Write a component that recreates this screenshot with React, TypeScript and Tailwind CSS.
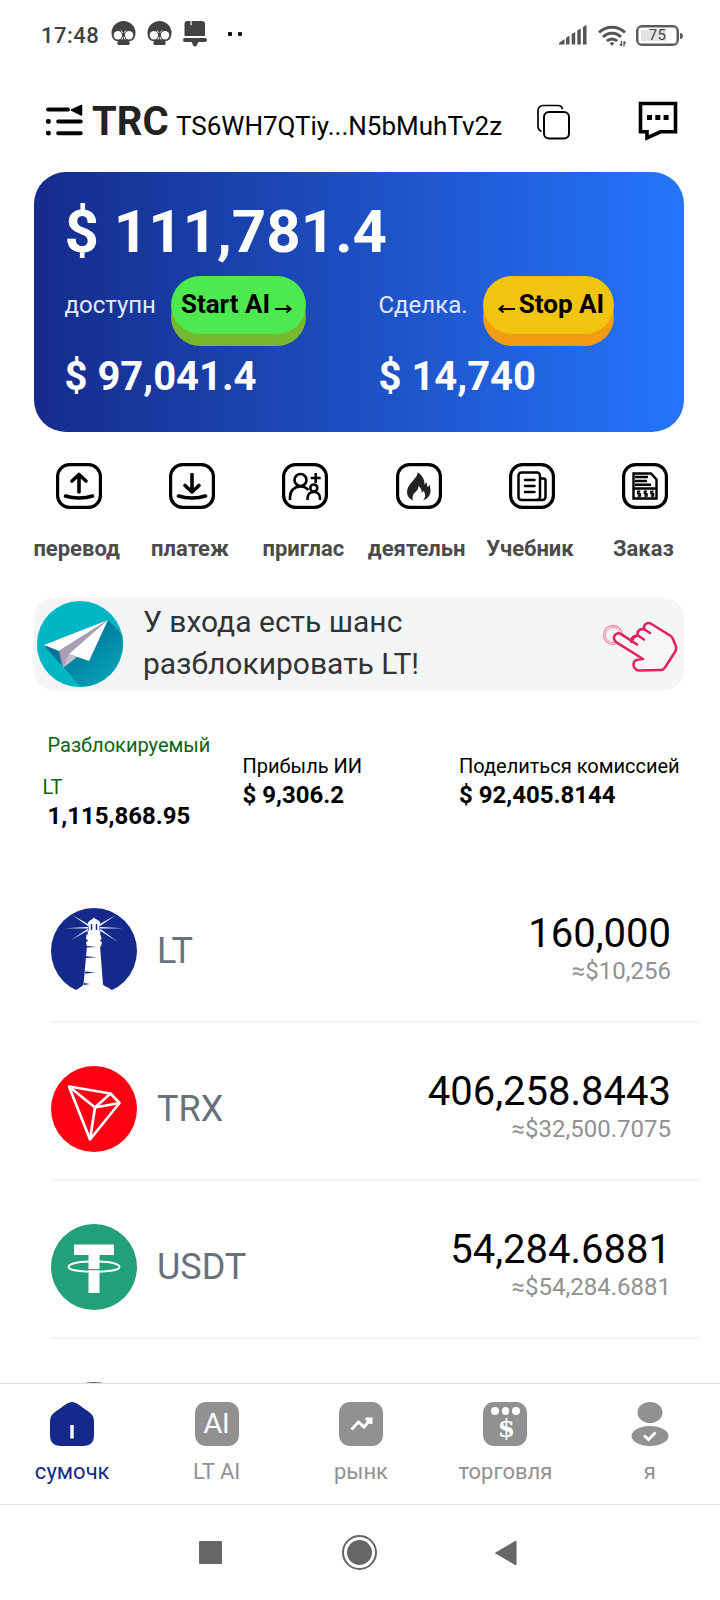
import type { ReactNode } from "react";

type Asset = {
  symbol: string;
  amount: string;
  usd: string;
  logo: ReactNode;
};

const SkullIcon = () => (
  <svg width="25" height="25" viewBox="0 0 25 25">
    <path d="M12.500 0a12 12 0 0 0-12 12c0 4 1.500 6.600 4 7.800l2.500.4-.8 1.800.8 2h11l.8-2-.8-1.800 2.500-.4c2.500-1.200 4-3.800 4-7.800a12 12 0 0 0-12-12z" fill="#424242" />
    <circle cx="6.900" cy="14.200" r="4.200" fill="#fff" />
    <circle cx="18.100" cy="14.200" r="4.200" fill="#fff" />
    <path d="M9.800 9.500l2.200 2.200M15.200 9.500L13 11.700M10.800 18.700l1.200-2.700M14.200 18.700L13 16" stroke="#fff" strokeWidth="1" />
  </svg>
);

const BellIcon = () => (
  <svg width="24" height="26" viewBox="0 0 24 26" fill="#424242">
    <path d="M4.500 0H19a3 3 0 0 1 3 3v12H1.500V3a3 3 0 0 1 3-3z" />
    <path d="M8 0v4.300" stroke="#fff" strokeWidth="1.200" />
    <rect x="0" y="17" width="24" height="4" rx="2" />
    <path d="M8.500 21h7l-1.800 3.500a2 2 0 0 1-3.400 0z" />
  </svg>
);

const StatusBar = () => (
  <div className="flex h-[71px] items-center pl-[41px] pr-[37px]">
    <span className="w-[70px] text-[22px] leading-none font-medium tracking-[0.5px] text-[#424242]">17:48</span>
    <div className="-mt-1 flex items-center gap-[11px]">
      <SkullIcon />
      <SkullIcon />
      <BellIcon />
    </div>
    <div className="ml-[21px] -mt-1 flex gap-1.5">
      <span className="size-1 rounded-[1px] bg-[#111]" />
      <span className="size-1 rounded-[1px] bg-[#111]" />
    </div>
    <div className="ml-auto flex items-center">
      <svg className="-mt-px" width="28" height="20" viewBox="0 0 28 20" fill="#555">
        <path d="M0 19.500v-1.500l5.500-4v5.500z" />
        <path d="M7 12.800l3.500-2v8.700H7z" />
        <path d="M12.700 9l3.500-2v12.500h-3.500z" />
        <path d="M18.300 5.500l3.500-2v16h-3.500z" />
        <path d="M24 2l3.500-2v19.500H24z" />
      </svg>
      <svg className="ml-[11px]" width="28" height="22" viewBox="0 0 28 22" fill="none" stroke="#555" strokeWidth="3">
        <path d="M1 7.500a18.500 18.500 0 0 1 26 0" />
        <path d="M5 12a12.500 12.500 0 0 1 18 0" />
        <path d="M8.800 16a7.500 7.500 0 0 1 10.400 0" />
        <path d="M11.500 18.300a3.800 3.800 0 0 1 5 0L14 20.800z" fill="#555" stroke="none" />
        <path d="M23.500 16v5M22 19l1.500 2M26 16.500v5M26 16.500l1.500 2" strokeWidth="1.300" />
      </svg>
      <div className="ml-2.5 flex h-[21px] w-[43px] items-center justify-center rounded-[6px] border-[2.5px] border-[#5c5c5c] p-[3px] shadow-[inset_0_0_0_0.5px_#5c5c5c]">
        <span className="h-full w-full bg-linear-to-r from-[#e3e3e3] from-75% to-white to-75% text-center text-[15px] leading-[11px] tracking-wide text-[#444]">75</span>
      </div>
      <span className="ml-px h-1.5 w-[3px] rounded-r bg-[#5c5c5c]" />
    </div>
  </div>
);

const Header = () => (
  <header className="flex h-[101px] items-center pl-[45px]">
    <svg className="-mt-1" width="38" height="32" viewBox="0 0 38 32" stroke="#000" strokeWidth="4" strokeLinecap="round">
      <path d="M3 5.500h20M13.200 17.500h22.500M13.200 29.200h22.500" />
      <path d="M3.200 17.500h.3M3.200 29.200h.3" strokeWidth="4.800" />
      <path d="M26.500 6L36.500 1.500v9.500z" strokeWidth="1.500" strokeLinejoin="round" />
    </svg>
    <div className="ml-[9px] flex w-[445px] items-baseline text-black">
      <span className="w-[84px] text-[40px] leading-none font-bold text-[#222]">TRC</span>
      <span className="text-[26px] leading-none">TS6WH7QTiy...N5bMuhTv2z</span>
    </div>
    <svg className="mt-px -ml-px" width="34" height="36" viewBox="0 0 34 36" fill="none" stroke="#000" strokeWidth="1.700">
      <path d="M5.500 27.500C3 26.500 2 25 2 22V6.500a5 5 0 0 1 5-5h15c2.500 0 4 1 4.600 3.700" />
      <rect x="8" y="8" width="25" height="26.500" rx="5" strokeWidth="2" />
    </svg>
    <svg className="-mt-px ml-[68px]" width="40" height="42" viewBox="0 0 40 42" fill="none" stroke="#000" strokeWidth="3.600">
      <path d="M2.500 3.500h35v28.300H22.500L9 38v-6.200H2.500z" />
      <path d="M9 17.500h5M17.300 17.500h5M25.600 17.500h5" strokeWidth="5" />
    </svg>
  </header>
);

const Arrow = ({ left }: { left?: boolean }) => (
  <svg className={left ? "mt-2 mr-1 ml-[5px] rotate-180" : "mt-2 mr-1 ml-[5px]"} width="17" height="10" viewBox="0 0 17 10" fill="none" stroke="#000" strokeWidth="2">
    <path d="M0 5h14M11.500 1.500L15.500 5l-4 3.500" />
  </svg>
);

const BalanceCard = () => (
  <section className="mx-[34px] h-[260px] w-[650px] rounded-[32px] bg-linear-to-r from-[#152b8b] to-[#2575fc] pt-[30px] pl-[30.5px] text-white">
    <h1 className="text-[60px] leading-[60px] font-bold">$ 111,781.4</h1>
    <div className="mt-3.5 flex">
      <div className="w-[314px]">
        <div className="flex h-[58px] items-center">
          <span className="w-[106.5px] text-2xl text-[#e4e9f8]">доступн</span>
          <button className="flex h-[58px] w-[135px] items-center justify-center rounded-[29px] bg-[#4ee84f] pb-px text-[26px] font-bold text-black shadow-[0_12px_0_#78b72f]">
            Start AI<Arrow />
          </button>
        </div>
        <p className="mt-[23px] text-[40px] leading-10 font-bold">$ 97,041.4</p>
      </div>
      <div>
        <div className="flex h-[58px] items-center">
          <span className="w-[104.5px] text-2xl text-[#e4e9f8]">Сделка.</span>
          <button className="flex h-[58px] w-[131px] items-center justify-center rounded-[29px] bg-[#f1c40f] pb-px text-[26px] font-bold text-black shadow-[0_12px_0_#f39c12]">
            <Arrow left />Stop AI
          </button>
        </div>
        <p className="mt-[23px] text-[40px] leading-10 font-bold">$ 14,740</p>
      </div>
    </div>
  </section>
);

const Tile = ({ children }: { children: ReactNode }) => (
  <svg width="46" height="46" viewBox="0 0 46 46" fill="none" stroke="#000" strokeLinecap="round" strokeLinejoin="round">
    <rect x="1.600" y="1.600" width="42.800" height="42.800" rx="12" strokeWidth="3.200" />
    {children}
  </svg>
);

const actions = [
  {
    label: "перевод",
    icon: (
      <g strokeWidth="3.600">
        <path d="M23 29V11.500M16 18l7-6.500 7 6.500" />
        <path d="M9.500 33c8 2.700 19 2.700 27 0" />
      </g>
    ),
  },
  {
    label: "платеж",
    icon: (
      <g strokeWidth="3.600">
        <path d="M23 11.500V29M16 22.500l7 6.500 7-6.500" />
        <path d="M9.500 33c8 2.700 19 2.700 27 0" />
      </g>
    ),
  },
  {
    label: "приглас",
    icon: (
      <g strokeWidth="2.600" strokeLinecap="butt">
        <circle cx="18.500" cy="17" r="6" />
        <path d="M8 37v-3c0-6 4-10.500 10.500-10.500 3.500 0 6 1.300 7.800 3.500" />
        <circle cx="31.800" cy="25" r="3.500" />
        <path d="M25.500 37v-1.500c0-4 2.500-6.500 6.300-6.500s6.200 2.500 6.200 6.500V37" />
        <path d="M33.700 10v10M28.700 15h10" />
      </g>
    ),
  },
  {
    label: "деятельн",
    icon: (
      <path
        d="M21.500 9.500c.8 5.500-10.500 11-10.500 19.500 0 4 2.500 7 6 8.500-1.500-5 1-7 3.500-9.500 1.500-1.500 2-3 1.800-5 2.500 1.500 3.500 4 3.500 6.500 1 0 1.600-.8 1.700-2 2 3 2.500 7-.5 10 4-1.500 7.500-4.500 7.500-9.500 0-2-.5-4-.5-6.500-.8 1.500-1.600 2.300-2.600 2.500.3-1.500-.6-2-.6-4.500-1.200.5-1.800 1.500-2.200 2.500C28.700 17 26.500 12 21.500 9.500z"
        fill="#222"
        stroke="none"
      />
    ),
  },
  {
    label: "Учебник",
    icon: (
      <g strokeWidth="2.500">
        <rect x="9.500" y="9.500" width="21.500" height="27.500" rx="3" />
        <path d="M32 15.500h2.500a2 2 0 0 1 2 2V34a3 3 0 0 1-3 3H28" />
        <path d="M16 17h9.500M16 23h9.500M16 29h9.500" />
      </g>
    ),
  },
  {
    label: "Заказ",
    icon: (
      <g strokeWidth="2.400" strokeLinecap="butt" strokeLinejoin="miter">
        <path d="M11.500 10.500h17.500l5.500 6v19h-23zM12 25.500h22" />
        <path d="M13 14h13M13 18h12M13 21.800h16" />
        <path d="M18.300 28.500h-2.600v2.200h2.600v2.300h-2.600M25 28.500h-2.600v2.200H25V33h-2.600M31.500 28.500h-2.600v2.200h2.600V33h-2.600" strokeWidth="1.500" />
        <path d="M17 27.300v7M23.700 27.300v7M30.200 27.300v7" strokeWidth="1" />
      </g>
    ),
  },
];

const QuickActions = () => (
  <div className="mt-[30.5px] ml-[22px] grid w-[680px] grid-cols-6">
    {actions.map((action) => (
      <div key={action.label} className="flex flex-col items-center">
        <Tile>{action.icon}</Tile>
        <span className="mt-7 mr-1 text-[22px] leading-6 font-bold whitespace-nowrap text-[#4b4b4b]">
          {action.label}
        </span>
      </div>
    ))}
  </div>
);

const Banner = () => (
  <div className="mt-[37.5px] ml-[34px] flex h-[92px] w-[650px] items-center rounded-[20px] bg-[#f4f5f7] pl-[3px]">
    <svg width="86" height="86" viewBox="0 0 86 86">
      <defs>
        <linearGradient id="plane" x1="0" y1="0" x2="1" y2="1">
          <stop offset="0.250" stopColor="#036f95" />
          <stop offset="0.850" stopColor="#04a8ba" />
        </linearGradient>
        <clipPath id="disc">
          <circle cx="43" cy="43" r="43" />
        </clipPath>
      </defs>
      <g clipPath="url(#disc)">
        <rect width="86" height="86" fill="#00b5c4" />
        <path d="M71 19l22 22v50H48L8 46z" fill="url(#plane)" />
        <path d="M8 46l19 21 21 24H0V46z" fill="#00b5c4" />
        <path d="M7 44l64-25-49 31z" fill="#fff" />
        <path d="M22 50l49-31-39 36-6 12z" fill="#ad9db4" />
        <path d="M26 67l6-14 8 3z" fill="#c9bfce" />
        <path d="M32 53l39-34-19 41z" fill="#fff" />
      </g>
    </svg>
    <p className="-mt-0.5 ml-5 w-[450px] text-[30px] leading-[42px] text-[#333]">
      У входа есть шанс
      <br />
      разблокировать LT!
    </p>
    <svg className="mt-2 ml-[9px]" width="76" height="54" viewBox="0 -1 76 54" fill="none" stroke="#e0245e" strokeWidth="2.600" strokeLinecap="round" strokeLinejoin="round">
      <circle cx="11" cy="13" r="9.500" strokeWidth="1.300" stroke="#ee8aa8" />
      <circle cx="11" cy="13" r="7.500" strokeWidth="1" stroke="#ee8aa8" />
      <path
        d="M35 22.500L19.500 12.300c-6-3.500-10.500 4-5 8L41 37c-8 .5-9.500 2-9.500 5.500 0 3 2.500 6 5.500 6l22-.5c2 0 3-1 4-2.500l10-15.500c1.500-2.300 1.500-3.500.8-6L71 17c-.5-1.500-1.500-2.500-3-3.500L49.500 2c-4-2.500-9 .5-7 5.500-4.500-1.500-8 1.500-6.500 6-4-.5-7.500 3-6.500 6.500"
        fill="#f7f5f8"
      />
      <path d="M29.500 19.500c1-3 4-5.500 6.500-6M36 13.500l6 4M42.500 7.500l5.500 3.500" />
    </svg>
  </div>
);

const Stats = () => (
  <div className="flex h-[193px] pt-8 text-xl text-black">
    <div className="w-[242.5px] pt-0.5 pl-[42.5px]">
      <p className="leading-[42px] text-[#0b640b]">
        <span className="ml-[5px]">Разблокируемый</span>
        <br />
        LT
      </p>
      <p className="ml-[5px] text-2xl leading-4 font-bold">1,115,868.95</p>
    </div>
    <div className="w-[216.5px] pt-8">
      <p className="leading-6">Прибыль ИИ</p>
      <p className="mt-[3px] text-2xl leading-7 font-bold">$ 9,306.2</p>
    </div>
    <div className="pt-8 whitespace-nowrap">
      <p className="leading-6">Поделиться комиссией</p>
      <p className="mt-[3px] text-2xl leading-7 font-bold">$ 92,405.8144</p>
    </div>
  </div>
);

const LighthouseLogo = () => (
  <svg width="86" height="86" viewBox="0 0 86 86">
    <circle cx="43" cy="43" r="43" fill="#15298a" />
    <g fill="#fff">
      <path d="M14 88l12-6.500c3-2 6-3.800 6.500-5L36 38h13l3 38.500c1 1.500 5 3 8 5L72 88z" />
      <path d="M35.500 26.500h14l1 4.500-1.500 1.500 2 2-1 4H36l-1-4 2-2-2-1.500z" />
      <path d="M37 14h12l-1 9.500H38z" />
      <path d="M37.500 14c1-1.500 3-2.500 4-3l1.500-1.500 1.500 1.500c1.500.5 3.500 1.500 4.500 3z" />
      <path d="M36.500 23h13l-.5 4H37z" />
      <path d="M37 18L21 7l17 9.500zM37 20.500L14 20.200l23-1.200zM38 22L20 32l16.500-11z" />
      <path d="M49 18L65 7l-17 9.500zM49 20.500l23-.3L49 19zM48 22L67 34 49.500 21z" />
    </g>
    <path d="M40.500 16v6M45.500 16v6" stroke="#15298a" strokeWidth="1.500" />
    <path d="M36 39.500l10-.5-10-1zM35 50l11-.8-11-1zM34 65.500l11-1-11-1zM33 77l6-1-6-1z" fill="#15298a" />
  </svg>
);

const TronLogo = () => (
  <svg width="86" height="86" viewBox="0 0 86 86" fill="none" stroke="#fff" strokeWidth="2.700" strokeLinejoin="round">
    <circle cx="43" cy="43" r="43" fill="#ff0013" stroke="none" />
    <path d="M18 20.500l41.500 7L68.500 37 39 73.500z" />
    <path d="M18 20.500l26 21 15.500-14M44 41.500L68.500 37M44 41.500l-5 32" />
  </svg>
);

const TetherLogo = () => (
  <svg width="86" height="86" viewBox="0 0 86 86">
    <circle cx="43" cy="43" r="43" fill="#22a07a" />
    <path d="M23 20.500h40V31H48.500v38h-11V31H23z" fill="#fff" />
    <path d="M37 45h12v1.200H37z" fill="#22a07a" />
    <path d="M38 37.500c-12 .3-20.500 2.600-20.500 5.400 0 3 11.500 4.800 25.500 4.800s25.500-1.800 25.500-4.800c0-2.800-8.500-5.100-20.500-5.400" fill="none" stroke="#fff" strokeWidth="1.900" />
  </svg>
);

const assets: Asset[] = [
  { symbol: "LT", amount: "160,000", usd: "≈$10,256", logo: <LighthouseLogo /> },
  { symbol: "TRX", amount: "406,258.8443", usd: "≈$32,500.7075", logo: <TronLogo /> },
  { symbol: "USDT", amount: "54,284.6881", usd: "≈$54,284.6881", logo: <TetherLogo /> },
];

const AssetRow = ({ asset }: { asset: Asset }) => (
  <div className="mb-[43px] ml-[51px] flex h-[115px] w-[649px] items-start border-b-2 border-[#f5f5f5] pr-[29px]">
    {asset.logo}
    <span className="ml-5 pt-[22.5px] text-4xl leading-10 text-[#69727b]">{asset.symbol}</span>
    <div className="ml-auto pt-1.5 text-right">
      <p className="text-[40px] leading-10 text-black">{asset.amount}</p>
      <p className="mt-[3px] text-2xl leading-7 text-[#919191]">{asset.usd}</p>
    </div>
  </div>
);

const GrayTile = ({ children }: { children: ReactNode }) => (
  <svg width="44" height="44" viewBox="0 0 44 44">
    <rect width="44" height="44" rx="11" fill="#919191" />
    {children}
  </svg>
);

const tabs = [
  {
    label: "сумочк",
    icon: (
      <svg width="44" height="44" viewBox="0 0 44 44">
        <path d="M17 1.500Q22-1.500 27 1.500L39 10q5 3.500 5 9v14q0 11-11 11H11Q0 44 0 33V19q0-5.500 5-9z" fill="#15298a" />
        <path d="M22 23v13.500" stroke="#fff" strokeWidth="3.400" />
      </svg>
    ),
  },
  {
    label: "LT AI",
    icon: (
      <span className="flex size-11 items-center justify-center rounded-[11px] bg-[#919191] pb-1 font-[Lato] text-[27px] leading-none text-white">
        AI
      </span>
    ),
  },
  {
    label: "рынк",
    icon: (
      <GrayTile>
        <path d="M12.500 27.500l7-7.500 5.500 5 6.500-7.500M26.500 17h5.500V22" fill="none" stroke="#fff" strokeWidth="3" />
      </GrayTile>
    ),
  },
  {
    label: "торговля",
    icon: (
      <span className="flex size-11 flex-col items-center rounded-[11px] bg-[#919191] pt-[5px] text-white">
        <span className="flex gap-[3px]">
          <span className="size-[7.5px] rounded-full bg-white" />
          <span className="size-[7.5px] rounded-full bg-white" />
          <span className="size-[7.5px] rounded-full bg-white" />
        </span>
        <span className="mt-[2px] ml-0.5 font-['DejaVu_Serif'] text-[25px] leading-6 font-bold">$</span>
      </span>
    ),
  },
  {
    label: "я",
    icon: (
      <svg width="44" height="44" viewBox="0 0 44 44" fill="#919191">
        <ellipse cx="22" cy="10.500" rx="12.500" ry="10.500" />
        <ellipse cx="22" cy="34" rx="18.500" ry="10" />
        <path d="M16 33.500l4.500 4 7-7" fill="none" stroke="#fff" strokeWidth="3" />
      </svg>
    ),
  },
];

const TabBar = () => (
  <nav className="grid h-[121px] w-[722px] shrink-0 grid-cols-5 border-b-[1.5px] border-[#dedede] bg-white pt-[18px] shadow-[0_-1px_1px_#e0e0e0]">
    {tabs.map((tab, index) => (
      <div key={tab.label} className="flex flex-col items-center">
        {tab.icon}
        <span className={`mt-3.5 text-[22px] leading-6 ${index === 0 ? "text-[#15298a]" : "text-[#919191]"}`}>
          {tab.label}
        </span>
      </div>
    ))}
  </nav>
);

const SystemNav = () => (
  <div className="flex h-[95px] shrink-0 items-center pl-[199px]">
    <span className="size-[23px] rounded-[1px] bg-[#666]" />
    <span className="ml-[120px] flex size-[35px] items-center justify-center rounded-full border-[2.5px] border-[#666]">
      <span className="size-[25px] rounded-full bg-[#666]" />
    </span>
    <svg className="ml-[117px]" width="24" height="28" viewBox="0 0 24 28">
      <path d="M1.500 14L22 2v24z" fill="#666" stroke="#666" strokeLinejoin="round" />
    </svg>
  </div>
);

export default function App() {
  return (
    <div className="flex h-[1600px] w-[720px] flex-col overflow-hidden bg-white font-[Roboto,sans-serif]">
      <main className="h-[1384px] shrink-0 overflow-hidden">
        <StatusBar />
        <Header />
        <BalanceCard />
        <QuickActions />
        <Banner />
        <Stats />
        <div className="mt-[25px]">
          {assets.map((asset) => (
            <AssetRow key={asset.symbol} asset={asset} />
          ))}
          <svg className="ml-[51px]" width="86" height="86" viewBox="0 0 86 86">
            <circle cx="43" cy="43" r="43" fill="#14507f" />
          </svg>
        </div>
      </main>
      <TabBar />
      <SystemNav />
    </div>
  );
}
